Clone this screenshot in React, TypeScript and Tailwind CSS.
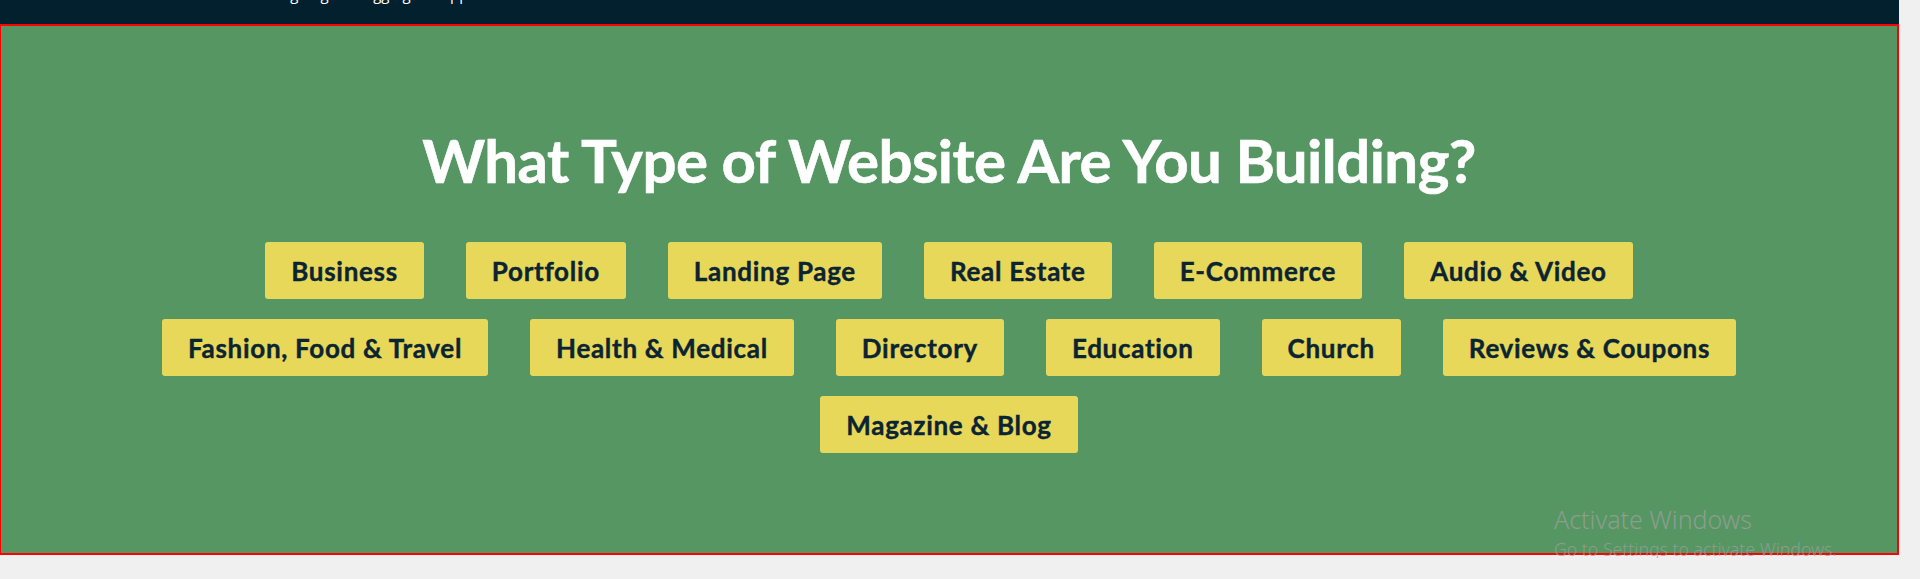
import React from "react";

const rows: string[][] = [
  ["Business", "Portfolio", "Landing Page", "Real Estate", "E-Commerce", "Audio & Video"],
  ["Fashion, Food & Travel", "Health & Medical", "Directory", "Education", "Church", "Reviews & Coupons"],
  ["Magazine & Blog"],
];

function Tag({ label }: { label: string }) {
  return (
    <a
      href="#"
      className="h-[57px] flex items-center justify-center px-[26px] rounded-[3px] bg-[#e8d85a] text-[#0b2433] text-[26px] font-bold tracking-[0.7px] leading-none whitespace-nowrap [-webkit-text-stroke:0.4px_#0b2433]"
    >
      {label}
    </a>
  );
}

export default function App() {
  return (
    <div className="relative w-full h-[579px] bg-[#f0f0f0] overflow-hidden font-['Lato',sans-serif]">
      <div className="w-[1899px]">
        <div className="h-[24px] bg-[#03202e] overflow-hidden">
          <div className="flex items-start pl-[260px] gap-[22px] -mt-[16px] text-white text-[15px] leading-[20px] font-['Open_Sans',sans-serif]">
            <span>Designing</span>
            <span>Blogging</span>
            <span>Support</span>
          </div>
        </div>
        <section className="h-[531px] border-2 border-l border-[#ff0000] bg-[#559662] flex flex-col items-center">
          <h2 className="mt-[104px] text-white text-[60px] font-bold tracking-[-0.55px] leading-none [-webkit-text-stroke:0.6px_#ffffff]">
            What Type of Website Are You Building?
          </h2>
          <div className="mt-[52px] flex flex-col items-center gap-[20px]">
            {rows.map((row, i) => (
              <div key={i} className="flex justify-center gap-[42px]">
                {row.map((label) => (
                  <Tag key={label} label={label} />
                ))}
              </div>
            ))}
          </div>
        </section>
      </div>
      <div className="absolute left-[1554px] top-[503px] h-[55px] overflow-hidden pointer-events-none font-['Noto_Sans',sans-serif] text-[rgba(160,160,160,0.75)]">
        <div className="text-[25px] leading-[33px] font-light">Activate Windows</div>
        <div className="text-[17.7px] leading-[27px] font-light">Go to Settings to activate Windows.</div>
      </div>
    </div>
  );
}
